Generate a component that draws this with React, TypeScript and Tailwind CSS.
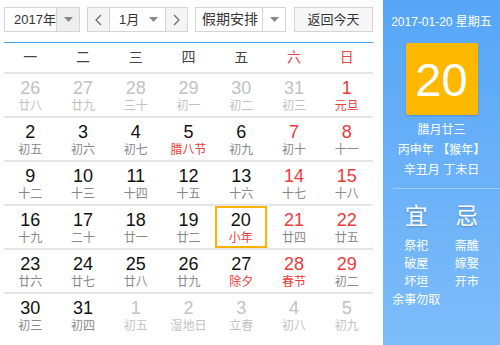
import React from 'react';

type Day = {
  n: number;
  l: string;
  other?: boolean;
  redNum?: boolean;
  redLunar?: boolean;
  sel?: boolean;
};

const weeks: Day[][] = [
  [
    { n: 26, l: '廿八', other: true },
    { n: 27, l: '廿九', other: true },
    { n: 28, l: '三十', other: true },
    { n: 29, l: '初一', other: true },
    { n: 30, l: '初二', other: true },
    { n: 31, l: '初三', other: true },
    { n: 1, l: '元旦', redNum: true, redLunar: true },
  ],
  [
    { n: 2, l: '初五' },
    { n: 3, l: '初六' },
    { n: 4, l: '初七' },
    { n: 5, l: '腊八节', redLunar: true },
    { n: 6, l: '初九' },
    { n: 7, l: '初十', redNum: true },
    { n: 8, l: '十一', redNum: true },
  ],
  [
    { n: 9, l: '十二' },
    { n: 10, l: '十三' },
    { n: 11, l: '十四' },
    { n: 12, l: '十五' },
    { n: 13, l: '十六' },
    { n: 14, l: '十七', redNum: true },
    { n: 15, l: '十八', redNum: true },
  ],
  [
    { n: 16, l: '十九' },
    { n: 17, l: '二十' },
    { n: 18, l: '廿一' },
    { n: 19, l: '廿二' },
    { n: 20, l: '小年', redLunar: true, sel: true },
    { n: 21, l: '廿四', redNum: true },
    { n: 22, l: '廿五', redNum: true },
  ],
  [
    { n: 23, l: '廿六' },
    { n: 24, l: '廿七' },
    { n: 25, l: '廿八' },
    { n: 26, l: '廿九' },
    { n: 27, l: '除夕', redLunar: true },
    { n: 28, l: '春节', redNum: true, redLunar: true },
    { n: 29, l: '初二', redNum: true },
  ],
  [
    { n: 30, l: '初三' },
    { n: 31, l: '初四' },
    { n: 1, l: '初五', other: true },
    { n: 2, l: '湿地日', other: true },
    { n: 3, l: '立春', other: true },
    { n: 4, l: '初八', other: true },
    { n: 5, l: '初九', other: true },
  ],
];

const weekdays = ['一', '二', '三', '四', '五', '六', '日'];

const Caret = () => (
  <svg width="9" height="5" viewBox="0 0 9 5">
    <path d="M0 0h9L4.5 5z" fill="#888" />
  </svg>
);

const Chevron = ({ dir }: { dir: 'l' | 'r' }) => (
  <svg width="7" height="12" viewBox="0 0 7 12">
    <path d={dir === 'l' ? 'M6 1L1 6l5 5' : 'M1 1l5 5-5 5'} fill="none" stroke="#666" strokeWidth="1.2" />
  </svg>
);

function DayCell({ d }: { d: Day }) {
  const numColor = d.other ? 'text-[#c2c2c2]' : d.redNum ? 'text-[#ee3a3a]' : 'text-[#111111]';
  const lunarColor = d.other ? 'text-[#c2c2c2]' : d.redLunar ? 'text-[#ee3a3a]' : 'text-[#888888]';
  return (
    <div className={`flex flex-col items-center ${d.sel ? 'border-2 border-[#ffb300] pt-[2px] mr-[1px]' : 'pt-[4px]'}`}>
      <span className={`text-[18px] leading-[20px] ${numColor}`}>{d.n}</span>
      <span className={`text-[12px] leading-[16px] ${lunarColor}`}>{d.l}</span>
    </div>
  );
}

export default function App() {
  return (
    <div
      className="w-[500px] h-[345px] flex bg-white overflow-hidden"
      style={{ fontFamily: '"Liberation Sans", "Noto Sans CJK SC", sans-serif' }}
    >
      {/* calendar */}
      <div className="w-[383px] pl-[4px] pr-[10px] pt-[7px]">
        <div className="flex h-[25px] text-[13px] text-[#333]">
          <div className="w-[76px] flex border border-[#d4d4d4]">
            <div className="flex-1 flex items-center pl-[9px]">2017年</div>
            <div className="w-[23px] flex items-center justify-center bg-[#eeeeee] border-l border-[#d4d4d4]">
              <Caret />
            </div>
          </div>
          <div className="ml-[7px] w-[101px] flex border border-[#d4d4d4]">
            <div className="w-[22px] flex items-center justify-center bg-[#f4f4f4] border-r border-[#d4d4d4]">
              <Chevron dir="l" />
            </div>
            <div className="flex-1 flex items-center justify-between pl-[9px] pr-[7px]">
              <span>1月</span>
              <Caret />
            </div>
            <div className="w-[22px] flex items-center justify-center bg-[#f4f4f4] border-l border-[#d4d4d4]">
              <Chevron dir="r" />
            </div>
          </div>
          <div className="ml-[7px] w-[91px] flex border border-[#d4d4d4]">
            <div className="flex-1 flex items-center justify-center text-[14px] pl-[2px]">假期安排</div>
            <div className="w-[23px] flex items-center justify-center border-l border-[#d4d4d4]">
              <Caret />
            </div>
          </div>
          <div className="ml-[8px] w-[79px] flex items-center justify-center border border-[#d4d4d4] bg-[#f7f7f7]">
            返回今天
          </div>
        </div>

        <div className="mt-[10px] border-t border-[#4aa3f5]" />
        <div className="grid grid-cols-7 h-[31px] items-center border-b-2 border-[#e6e6e6] text-[14px]">
          {weekdays.map((w, i) => (
            <span key={w} className={`text-center ${i >= 5 ? 'text-[#e84545]' : 'text-[#444]'}`}>
              {w}
            </span>
          ))}
        </div>

        {weeks.map((wk, i) => (
          <div
            key={i}
            className={`grid grid-cols-7 h-[44px] ${i < weeks.length - 1 ? 'border-b-2 border-[#e6e6e6]' : ''}`}
          >
            {wk.map((d, j) => (
              <DayCell key={j} d={d} />
            ))}
          </div>
        ))}
      </div>

      {/* side panel */}
      <div className="w-[117px] h-full bg-gradient-to-b from-[#56a6f7] to-[#7dbcfa] text-white flex flex-col items-center">
        <div className="mt-[14px] text-[12px] leading-[16px]">2017-01-20 星期五</div>
        <div className="mt-[13px] w-[72px] h-[72px] bg-[#ffb800] rounded-[2px] shadow-[0_1px_2px_rgba(0,0,0,0.2)] flex items-center justify-center text-[47px] leading-none">
          20
        </div>
        <div className="mt-[5px] text-[12px] leading-[20px] text-center">
          <div>腊月廿三</div>
          <div>丙申年 【猴年】</div>
          <div>辛丑月 丁未日</div>
        </div>
        <div className="mt-[8px] ml-[10px] w-[107px] border-t border-[#9fcbf7]" />
        <div className="mt-[13px] w-full flex text-center">
          <div className="flex-1 pl-[8px] flex flex-col items-center">
            <div className="text-[23px] leading-[28px] [text-shadow:0_1px_2px_rgba(0,0,0,0.25)]">宜</div>
            <div className="mt-[7px] text-[12px] leading-[18px]">
              <div>祭祀</div>
              <div>破屋</div>
              <div>坏垣</div>
              <div>余事勿取</div>
            </div>
          </div>
          <div className="flex-1 pr-[8px] flex flex-col items-center">
            <div className="text-[23px] leading-[28px] [text-shadow:0_1px_2px_rgba(0,0,0,0.25)]">忌</div>
            <div className="mt-[7px] text-[12px] leading-[18px]">
              <div>斋醮</div>
              <div>嫁娶</div>
              <div>开市</div>
            </div>
          </div>
        </div>
      </div>
    </div>
  );
}
